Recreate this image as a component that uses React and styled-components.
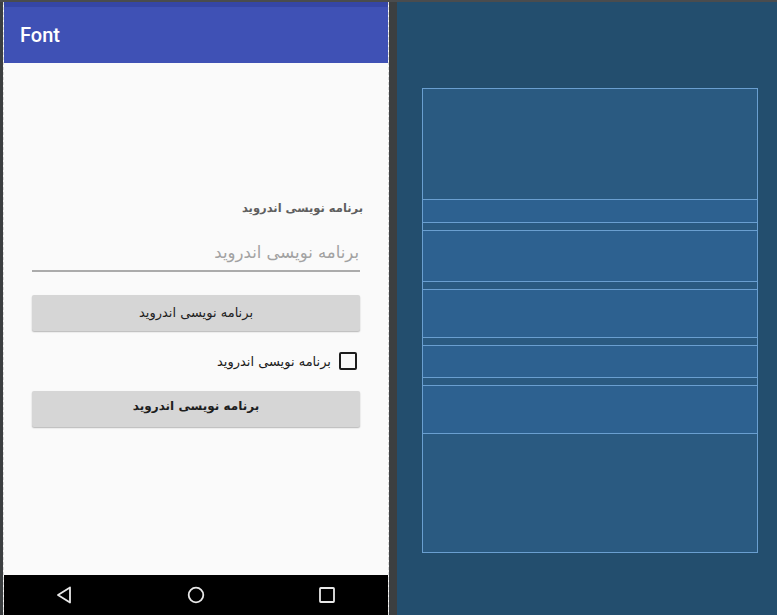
import React from "react";
import styled, { createGlobalStyle } from "styled-components";

const Global = createGlobalStyle`
  html, body { margin: 0; padding: 0; background: #3c3f41; }
  body { font-family: Roboto, "DejaVu Sans", sans-serif; overflow: hidden; }
`;

const Page = styled.div`
  width: 777px;
  height: 615px;
  display: flex;
  flex-direction: column;
  background: #3c3f41;
`;

const Ruler = styled.div`
  height: 2px;
  flex: none;
  background: #4a4c4e;
`;

const Body = styled.div`
  flex: 1;
  display: flex;
  min-height: 0;
`;

const PhoneColumn = styled.div`
  width: 397px;
  padding-left: 3px;
  box-sizing: border-box;
  display: flex;
`;

const Phone = styled.div`
  width: 386px;
  box-sizing: border-box;
  border-left: 1px dashed #d8d8d8;
  border-right: 1px dashed #d8d8d8;
  display: flex;
  flex-direction: column;
  background: #fafafa;
`;

const StatusBar = styled.div`
  height: 5px;
  flex: none;
  background: #3546a6;
`;

const Toolbar = styled.div`
  height: 56px;
  flex: none;
  background: #3f51b5;
  display: flex;
  align-items: center;
  padding-left: 16px;
  color: #fff;
  font-family: Roboto, sans-serif;
  font-size: 20px;
  font-weight: 500;
`;

const Content = styled.div`
  flex: 1;
  display: flex;
  flex-direction: column;
  gap: 8px;
  padding: 136px 24px 0 24px;
  direction: rtl;
  font-family: "DejaVu Sans", sans-serif;
`;

const Label = styled.div`
  height: 23px;
  display: flex;
  align-items: center;
  padding: 0 1px 5px 0;
  box-sizing: border-box;
  font-size: 11.5px;
  font-weight: bold;
  color: #5f5f5f;
`;

const EditText = styled.div`
  height: 51px;
  padding: 0 4px;
  display: flex;
  flex-direction: column;
  justify-content: flex-end;
`;

const Hint = styled.div`
  font-size: 16.5px;
  color: #a2a2a2;
  padding: 0 1px 8px 0;
`;

const Underline = styled.div`
  height: 2px;
  background: #ababab;
  margin-bottom: 9px;
`;

const Button = styled.div`
  height: 48px;
  padding: 6px 4px;
  box-sizing: border-box;
  display: flex;
`;

const ButtonFace = styled.div`
  flex: 1;
  background: #d6d6d6;
  border-radius: 2px;
  box-shadow: 0 1px 1.5px rgba(0, 0, 0, 0.28);
  display: flex;
  align-items: center;
  justify-content: center;
  font-size: ${(p) => (p.$bold ? "12px" : "13px")};
  font-weight: ${(p) => (p.$bold ? "bold" : "normal")};
  color: #1e1e1e;
  padding-bottom: ${(p) => (p.$bold ? "6px" : "2px")};
`;

const CheckRow = styled.div`
  height: 32px;
  display: flex;
  align-items: center;
  padding-right: 7px;
  gap: 8px;
  font-size: 13px;
  color: #1a1a1a;
`;

const Box = styled.div`
  width: 14px;
  height: 14px;
  border: 2px solid #1d1d1d;
  border-radius: 2px;
  flex: none;
`;

const NavBar = styled.div`
  height: 40px;
  flex: none;
  background: #000;
  display: flex;
  align-items: center;
  justify-content: space-between;
  padding: 0 51px 0 50px;
`;

const NavIcon = styled.svg`
  width: 20px;
  height: 20px;
  display: block;
`;

const Blueprint = styled.div`
  flex: 1;
  background: #234e6e;
  padding: 86px 19px 62px 25px;
  display: flex;
`;

const Frame = styled.div`
  flex: 1;
  border: 1px solid #6a9fd0;
  background: #2a5a81;
  display: flex;
  flex-direction: column;
  padding-top: 110px;
  gap: 7px;
`;

const Bound = styled.div`
  height: ${(p) => p.$h}px;
  box-sizing: border-box;
  border-top: 1px solid #6a9fd0;
  border-bottom: 1px solid #6a9fd0;
  background: #2d6190;
`;

const TEXT = "برنامه نویسی اندروید";

export default function App() {
  return (
    <Page>
      <Global />
      <Ruler />
      <Body>
        <PhoneColumn>
          <Phone>
            <StatusBar />
            <Toolbar>Font</Toolbar>
            <Content>
              <Label>{TEXT}</Label>
              <EditText>
                <Hint>{TEXT}</Hint>
                <Underline />
              </EditText>
              <Button>
                <ButtonFace>{TEXT}</ButtonFace>
              </Button>
              <CheckRow>
                <Box />
                <span>{TEXT}</span>
              </CheckRow>
              <Button>
                <ButtonFace $bold>{TEXT}</ButtonFace>
              </Button>
            </Content>
            <NavBar>
              <NavIcon viewBox="0 0 20 20">
                <path d="M16 2.5 L4 10 L16 17.5 Z" fill="none" stroke="#e8e8e8" strokeWidth="1.8" strokeLinejoin="round" />
              </NavIcon>
              <NavIcon viewBox="0 0 20 20">
                <circle cx="10" cy="10" r="7.3" fill="none" stroke="#e8e8e8" strokeWidth="1.8" />
              </NavIcon>
              <NavIcon viewBox="0 0 20 20">
                <rect x="3" y="3" width="14" height="14" rx="0.8" fill="none" stroke="#e8e8e8" strokeWidth="1.8" />
              </NavIcon>
            </NavBar>
          </Phone>
        </PhoneColumn>
        <Blueprint>
          <Frame>
            <Bound $h={24} />
            <Bound $h={52} />
            <Bound $h={49} />
            <Bound $h={33} />
            <Bound $h={49} />
          </Frame>
        </Blueprint>
      </Body>
    </Page>
  );
}
